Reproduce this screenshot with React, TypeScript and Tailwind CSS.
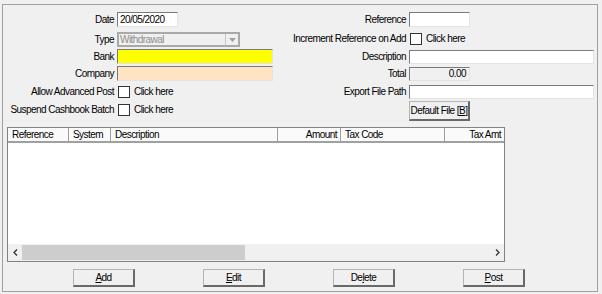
import React from "react";

const font = "font-['Liberation_Sans',Arial,sans-serif] text-[10px] tracking-[-0.55px] text-black whitespace-nowrap";

const sunken = "border-t border-l border-t-[#7a7a7a] border-l-[#7a7a7a] border-b border-r border-b-[#e3e3e3] border-r-[#e3e3e3]";

function Label({ children }: { children: React.ReactNode }) {
  return <div className="flex items-center justify-end leading-none">{children}</div>;
}

function CheckBox() {
  return <div className="w-[12px] h-[12px] border border-[#333333] bg-white shrink-0" />;
}

function CheckRow({ text }: { text: string }) {
  return (
    <div className="flex items-center gap-[4px] leading-none">
      <CheckBox />
      <span>{text}</span>
    </div>
  );
}

function Button({ children, className = "" }: { children: React.ReactNode; className?: string }) {
  return (
    <div
      className={
        "flex items-center justify-center bg-[#f0f0f0] border-t border-l border-t-[#b4b4b4] border-l-[#b4b4b4] border-r-2 border-b-2 border-r-[#696969] border-b-[#696969] leading-none " +
        className
      }
    >
      {children}
    </div>
  );
}

const columns = [
  { name: "Reference", w: "w-[61px]", right: false },
  { name: "System", w: "w-[42px]", right: false },
  { name: "Description", w: "w-[167px]", right: false },
  { name: "Amount", w: "w-[63px]", right: true },
  { name: "Tax Code", w: "w-[104px]", right: false },
  { name: "Tax Amt", w: "w-[60px]", right: true },
];

export default function App() {
  return (
    <div className={"w-[602px] h-[294px] bg-[#f0f0f0] pt-[4px] pl-[2px] overflow-hidden " + font}>
      <div className="w-[596px] h-[288px] border border-[#a0a0a0] flex flex-col">
        {/* form */}
        <div className="flex items-start pt-[7px]">
          {/* left column */}
          <div className="w-[277px] grid grid-cols-[111px_1fr] gap-x-[3px]">
            <Label>Date</Label>
            <div className={"h-[15px] w-[61px] bg-white flex items-center pl-[2px] " + sunken}>
              <span className="leading-none">20/05/2020</span>
            </div>

            <div className="mt-[5px] flex items-center justify-end leading-none">Type</div>
            <div className="mt-[5px] h-[15px] w-[123px] bg-[#f0f0f0] border-2 border-[#a9a9a9] flex items-center">
              <span className="pl-[1px] text-[#8c8c8c] flex-1 leading-none">Withdrawal</span>
              <div className="w-[13px] h-[11px] border-l border-[#c8c8c8] flex items-center justify-center">
                <svg width="7" height="4" viewBox="0 0 7 4">
                  <path d="M0 0 L7 0 L3.5 4 Z" fill="#a0a0a0" />
                </svg>
              </div>
            </div>

            <div className="mt-[2px] flex items-center justify-end leading-none">Bank</div>
            <div className={"mt-[2px] h-[15px] w-[156px] bg-[#ffff00] " + sunken} />

            <div className="mt-[2px] flex items-center justify-end leading-none">Company</div>
            <div className={"mt-[2px] h-[15px] w-[156px] bg-[#ffe4c4] " + sunken} />

            <div className="mt-[4px] h-[13px] flex items-center justify-end leading-none">Allow Advanced Post</div>
            <div className="mt-[4px] h-[13px] flex items-center pl-[1px]">
              <CheckRow text="Click here" />
            </div>

            <div className="mt-[5px] h-[13px] flex items-center justify-end leading-none">Suspend Cashbook Batch</div>
            <div className="mt-[5px] h-[13px] flex items-center pl-[1px]">
              <CheckRow text="Click here" />
            </div>
          </div>

          {/* right column */}
          <div className="w-[315px] grid grid-cols-[126px_1fr] gap-x-[3px]">
            <Label>Reference</Label>
            <div className={"h-[15px] w-[61px] bg-white " + sunken} />

            <div className="mt-[5px] h-[13px] flex items-center justify-end leading-none">Increment Reference on Add</div>
            <div className="mt-[5px] h-[13px] flex items-center pl-[1px]">
              <CheckRow text="Click here" />
            </div>

            <div className="mt-[5px] h-[14px] flex items-center justify-end leading-none">Description</div>
            <div className={"mt-[5px] h-[14px] w-[185px] bg-white " + sunken} />

            <div className="mt-[3px] h-[14px] flex items-center justify-end leading-none">Total</div>
            <div className={"mt-[3px] h-[14px] w-[61px] bg-[#f0f0f0] flex items-center justify-end pr-[3px] " + sunken}>
              <span className="leading-none">0.00</span>
            </div>

            <div className="mt-[4px] h-[14px] flex items-center justify-end leading-none">Export File Path</div>
            <div className={"mt-[4px] h-[14px] w-[185px] bg-white " + sunken} />

            <div className="mt-[2px]" />
            <Button className="mt-[2px] h-[20px] w-[61px]">
              <span>
                Default File [<span className="underline">B</span>]
              </span>
            </Button>
          </div>
        </div>

        {/* grid */}
        <div className="mt-[6px] ml-[4px] w-[498px] h-[135px] border border-[#828282] bg-white flex flex-col">
          <div className="h-[15px] flex overflow-hidden border-b-2 border-b-[#a0a0a0] bg-[#fafafa]">
            {columns.map((c) => (
              <div
                key={c.name}
                className={
                  "shrink-0 h-full flex items-center leading-none border-r border-r-[#a0a0a0] " +
                  c.w +
                  (c.right ? " justify-end pr-[3px]" : " pl-[4px]")
                }
              >
                {c.name}
              </div>
            ))}
          </div>
          <div className="flex-1" />
          <div className="h-[17px] flex items-center bg-[#f0f0f0]">
            <div className="w-[14px] h-full flex items-center justify-center">
              <svg width="5" height="7" viewBox="0 0 5 7">
                <path d="M4 0.5 L1 3.5 L4 6.5" stroke="#333" strokeWidth="1.3" fill="none" />
              </svg>
            </div>
            <div className="w-[223px] h-[15px] bg-[#cdcdcd]" />
            <div className="flex-1" />
            <div className="w-[14px] h-full flex items-center justify-center">
              <svg width="5" height="7" viewBox="0 0 5 7">
                <path d="M1 0.5 L4 3.5 L1 6.5" stroke="#333" strokeWidth="1.3" fill="none" />
              </svg>
            </div>
          </div>
        </div>

        {/* buttons */}
        <div className="mt-[7px] flex pl-[70px] gap-[68px]">
          <Button className="w-[62px] h-[18px]">
            <span><span className="underline">A</span>dd</span>
          </Button>
          <Button className="w-[62px] h-[18px]">
            <span><span className="underline">E</span>dit</span>
          </Button>
          <Button className="w-[62px] h-[18px]">
            <span>De<span className="underline">l</span>ete</span>
          </Button>
          <Button className="w-[62px] h-[18px]">
            <span><span className="underline">P</span>ost</span>
          </Button>
        </div>
      </div>
    </div>
  );
}
